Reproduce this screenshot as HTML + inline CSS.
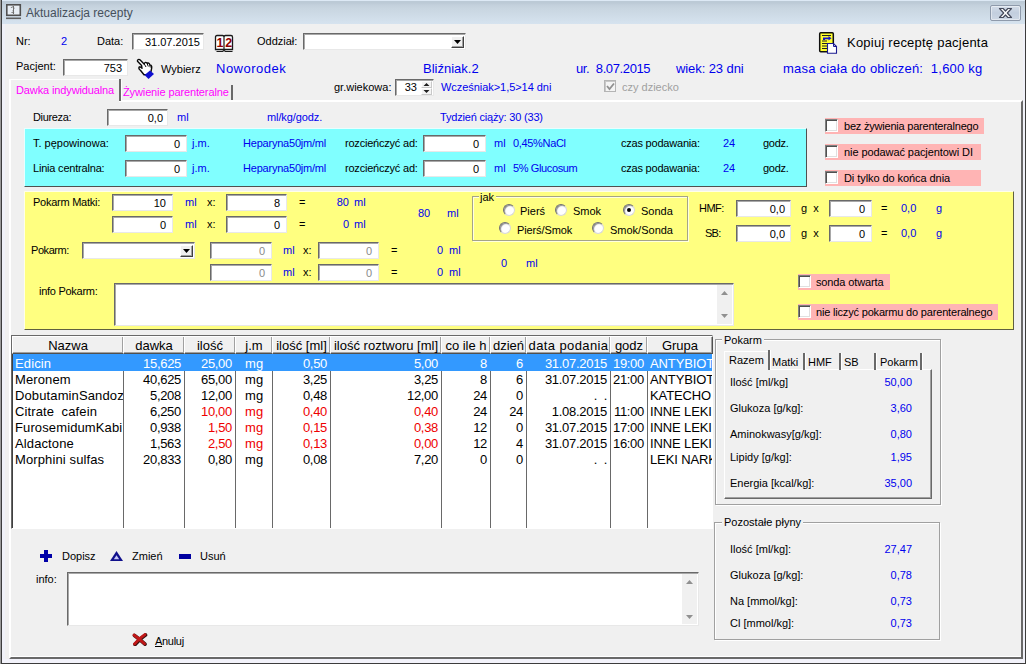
<!DOCTYPE html>
<html><head><meta charset="utf-8"><title>Aktualizacja recepty</title>
<style>
*{box-sizing:border-box;margin:0;padding:0}
html,body{width:1026px;height:664px;overflow:hidden;background:#f0f0f0}
body{font-family:"Liberation Sans",sans-serif;font-size:11px;color:#000;position:relative}
.a{position:absolute;white-space:nowrap;line-height:13px}
.b{color:#0000ee}
.m{color:#ff00ff}
.r{color:#ee0000}
.w{color:#fff}
.g{color:#a0a0a0}
.f13{font-size:13px;line-height:15px}
.f12{font-size:12px;line-height:14px}
.in{position:absolute;background:#fff;border:1px solid;border-color:#696969 #e8e8e8 #e8e8e8 #696969;box-shadow:inset 1px 1px 0 #a8a8a8;text-align:right;font-size:11px;line-height:13px;padding:2px 6px 0 0;white-space:nowrap;overflow:hidden}
.in.d{color:#8a8a8a}
.cb{position:absolute;width:13px;height:13px;background:#fff;border:1px solid;border-color:#808080 #fff #fff #808080;box-shadow:inset 1px 1px 0 #505050,inset -1px -1px 0 #e0e0e0}
.pk{position:absolute;background:#ffb4b4;height:16px}
.rd{position:absolute;width:12px;height:12px;border-radius:50%;background:#fff;border:1px solid;border-color:#707070 #d8d8d8 #d8d8d8 #707070;box-shadow:inset 1px 1px 1px #909090}
.rd.on::after{content:"";position:absolute;left:3px;top:3px;width:4px;height:4px;border-radius:50%;background:#000}
.hd{position:absolute;top:336px;height:18px;background:#f0f0f0;border:1px solid;border-color:#fff #505050 #505050 #fff;box-shadow:inset -1px -1px 0 #a0a0a0;text-align:center;font-size:13px;line-height:16px;padding-top:1px;overflow:hidden;white-space:nowrap}
.c{position:absolute;font-size:13px;line-height:16px;height:16px;white-space:nowrap;overflow:hidden}
.cr{text-align:right;letter-spacing:-0.3px}
.cn{letter-spacing:0.12px}
.vl{position:absolute;width:1px;background:#696969;top:354px;height:174px}
.gb{position:absolute;border:1px solid #a0a0a0;box-shadow:1px 1px 0 #fff,inset 1px 1px 0 #fff}
</style></head><body>
<div class="a" style="left:0px;top:0px;width:1026px;height:664px;background:#f0f0f0"></div>
<div class="a" style="left:0px;top:0px;width:1026px;height:24px;background:linear-gradient(#dde9f5 0,#dde9f5 1px,#bccad6 1.500px,#bccad6 3px,#c3d0dc 5px,#c8d5e0 8px,#d6e3ef 24px)"></div>
<div class="a" style="left:0px;top:0px;width:1px;height:664px;background:#9a9a9a"></div>
<div class="a" style="left:1px;top:0px;width:1px;height:664px;background:#3c3c3c"></div>
<div class="a" style="left:2px;top:24px;width:3px;height:640px;background:#f0f1f8"></div>
<div class="a" style="left:1025px;top:0px;width:1px;height:664px;background:#3c3c3c"></div>
<div class="a" style="left:1023px;top:24px;width:2px;height:640px;background:#f0f1f8"></div>
<div class="a" style="left:1px;top:663px;width:1025px;height:1px;background:#3c3c3c"></div>
<div class="a" style="left:2px;top:659px;width:1023px;height:4px;background:#f2f2fa"></div>
<svg class="a" style="left:6px;top:4px" width="16" height="16" viewBox="0 0 16 16"><rect x="0.8" y="0.8" width="13.5" height="10.5" fill="#e8eef4" stroke="#505050" stroke-width="1.600"/><rect x="0" y="13.500" width="15" height="1.600" fill="#606060"/><path d="M7.500 2v8M5 4c1-2 4-1 2.500 1.500S10 9 5.500 8.500" stroke="#707070" fill="none" stroke-width="1"/></svg>
<div class="a f12" style="left:26px;top:6px;color:#46505c">Aktualizacja recepty</div>
<div class="a" style="left:990px;top:5px;width:31px;height:16px;border:1px solid #8e9aab;border-radius:2px;background:linear-gradient(#d3dce8,#c2cede 50%,#cdd7e4);box-shadow:inset 0 0 0 1px rgba(255,255,255,.45)"></div>
<svg class="a" style="left:998px;top:7px" width="15" height="12" viewBox="0 0 15 12"><path d="M1.500 1.500h3.600l2.400 2.500 2.400-2.500h3.600l-4.200 4.500 4.200 4.500h-3.600l-2.400-2.500-2.400 2.500h-3.600l4.200-4.500z" fill="#fff" stroke="#464b5c" stroke-width="1.200" stroke-linejoin="round"/></svg>
<div class="a " style="left:16px;top:35px;">Nr:</div>
<div class="a b" style="left:61px;top:35px;">2</div>
<div class="a " style="left:97px;top:35px;">Data:</div>
<div class="in " style="left:132px;top:33px;width:72px;height:17px;padding-right:3px">31.07.2015</div>
<svg class="a" style="left:214px;top:34px" width="20" height="19" viewBox="0 0 20 19"><path d="M1.500 3Q1.500 1.500 3 1.500H8.500Q10 1.500 10 3Q10 1.500 11.500 1.500H17Q18.500 1.500 18.500 3V15.500H1.500Z" fill="#fff" stroke="#1a1a1a" stroke-width="1.300"/><path d="M10 3V15.500M2.500 17.500H8.500L10 16.500L11.500 17.500H18.500" fill="none" stroke="#1a1a1a" stroke-width="1.200"/><text x="2.600" y="13" font-family="Liberation Sans" font-weight="bold" font-size="12.500" fill="#900000">1</text><text x="11.300" y="13" font-family="Liberation Sans" font-weight="bold" font-size="12.500" fill="#900000">2</text></svg>
<div class="a " style="left:257px;top:35px;">Oddział:</div>
<div class="in " style="left:303px;top:33px;width:163px;height:17px;"></div>
<div class="a" style="left:451px;top:36px;width:13px;height:12px;background:#f0f0f0;border:1px solid;border-color:#fff #404040 #404040 #fff;box-shadow:inset -1px -1px 0 #a0a0a0"></div>
<svg class="a" style="left:454px;top:40px" width="7" height="4" viewBox="0 0 7 4"><path d="M0 0h7l-3.500 4z" fill="#000"/></svg>
<svg class="a" style="left:818px;top:31px" width="21" height="23" viewBox="0 0 21 23"><rect x="1.700" y="1.700" width="13.600" height="19" rx="1" fill="#ffff30" stroke="#101010" stroke-width="1.500"/><path d="M4 4.500h9M4 10h5M4 12.500h5M4 15h5M4 17.500h5" stroke="#202020" stroke-width="1.100"/><path d="M5 9V6.500h5.500V5l3 2.300-3 2.200V8.200H7V9z" fill="#1414c8"/><path d="M9.500 12.500h6l3 3v6.800h-9z" fill="#fff" stroke="#1a1a90" stroke-width="1.100"/><path d="M15.500 12.500v3h3" fill="none" stroke="#1a1a90" stroke-width="1"/></svg>
<div class="a f13" style="left:847px;top:35px;letter-spacing:0.23px;">Kopiuj receptę pacjenta</div>
<div class="a " style="left:16px;top:60px;">Pacjent:</div>
<div class="in " style="left:63px;top:59px;width:65px;height:17px;padding-right:5px">753</div>
<svg class="a" style="left:136px;top:58px" width="20" height="22" viewBox="0 0 20 22"><path d="M1.500 3.200C1 1.600 3 0.800 4.200 2L8.300 6.200C8.500 4 10.500 3.800 11.200 5.600C12 4.600 13.600 5 13.800 7C15 6.800 16 8 15.700 9.800L15 13.500L12 16.500L8 16.800L4.600 12.500C2.500 11 2.200 9.200 4 8.800L6 10.300L5.600 7.600Z" fill="#fff" stroke="#0a0a0a" stroke-width="1.400" stroke-linejoin="round"/><path d="M8.600 6.500L10 9M11.300 6L12.300 8.500M13.800 7.300L14.300 9.500" stroke="#0a0a0a" stroke-width="1" fill="none"/><path d="M8.500 17L14 12.500L18 16L12.500 21Z" fill="#1010d0"/></svg>
<div class="a " style="left:161px;top:63px;">Wybierz</div>
<div class="a b f13" style="left:216px;top:61px;letter-spacing:0.50px;">Noworodek</div>
<div class="a b f13" style="left:423px;top:61px;">Bliźniak.2</div>
<div class="a b f13" style="left:576px;top:61px;letter-spacing:-0.38px;">ur.&nbsp; 8.07.2015</div>
<div class="a b f13" style="left:676px;top:61px;letter-spacing:-0.09px;">wiek: 23 dni</div>
<div class="a b f13" style="left:783px;top:61px;letter-spacing:0.22px;">masa ciała do obliczeń:&nbsp; 1,600 kg</div>
<div class="a " style="left:334px;top:81px;">gr.wiekowa:</div>
<div class="in " style="left:395px;top:79px;width:39px;height:17px;padding:1px 16px 0 0">33</div>
<div class="a" style="left:421px;top:81px;width:11px;height:7px;background:#f4f4f4;border:1px solid;border-color:#fff #c8c8c8 #c8c8c8 #fff"></div>
<div class="a" style="left:421px;top:88px;width:11px;height:7px;background:#f4f4f4;border:1px solid;border-color:#fff #c8c8c8 #c8c8c8 #fff"></div>
<svg class="a" style="left:423px;top:83px" width="7" height="10" viewBox="0 0 7 10"><path d="M0.500 3h6l-3-3zM0.500 7h6l-3 3z" fill="#202020"/></svg>
<div class="a b" style="left:441px;top:81px;letter-spacing:-0.05px;">Wcześniak&gt;1,5&gt;14 dni</div>
<div class="a" style="left:604px;top:80px;width:12px;height:12px;background:#f4f4f4;border:1px solid #b4b4b4;box-shadow:inset 1px 1px 0 #c8c8c8"></div>
<svg class="a" style="left:606px;top:82px" width="9" height="9" viewBox="0 0 9 9"><path d="M1 4l2.500 3L8 1.500" stroke="#909090" stroke-width="1.800" fill="none"/></svg>
<div class="a g" style="left:622px;top:81px;">czy dziecko</div>
<div class="a" style="left:9px;top:100px;width:1014px;height:559px;border:2px solid;border-color:#fff #696969 #696969 #fff;background:#f0f0f0"></div>
<div class="a" style="left:11px;top:656px;width:1010px;height:1px;background:#fff"></div>
<div class="a" style="left:9px;top:79px;width:110px;height:23px;background:#f0f0f0;border-top:1px solid #fff;border-left:2px solid #fff"></div>
<div class="a m" style="left:16px;top:84px;letter-spacing:-0.12px;">Dawka indywidualna</div>
<div class="a" style="left:119px;top:79px;width:2px;height:22px;background:#696969"></div>
<div class="a" style="left:121px;top:80px;width:1px;height:20px;background:#fff"></div>
<div class="a m" style="left:123px;top:86px;letter-spacing:-0.12px;">Żywienie parenteralne</div>
<div class="a" style="left:231px;top:85px;width:2px;height:15px;background:#696969"></div>
<div class="a " style="left:33px;top:111px;letter-spacing:-0.34px;">Diureza:</div>
<div class="in " style="left:107px;top:109px;width:61px;height:17px;padding-right:4px">0,0</div>
<div class="a b" style="left:177px;top:111px;">ml</div>
<div class="a b" style="left:267px;top:111px;letter-spacing:-0.10px;">ml/kg/godz.</div>
<div class="a b" style="left:440px;top:111px;letter-spacing:-0.19px;">Tydzień ciąży: 30 (33)</div>
<div class="a" style="left:24px;top:128px;width:783px;height:59px;background:#80ffff;border:1px solid;border-color:#e8ffff #505050 #505050 #e8ffff"></div>
<div class="a " style="left:33px;top:137px;">T. pępowinowa:</div>
<div class="in " style="left:125px;top:135px;width:62px;height:17px;">0</div>
<div class="a b" style="left:192px;top:137px;">j.m.</div>
<div class="a b" style="left:243px;top:137px;letter-spacing:-0.21px;">Heparyna50jm/ml</div>
<div class="a " style="left:345px;top:137px;letter-spacing:-0.21px;">rozcieńczyć ad:</div>
<div class="in " style="left:423px;top:135px;width:63px;height:17px;">0</div>
<div class="a b" style="left:494px;top:137px;">ml</div>
<div class="a b" style="left:513px;top:137px;letter-spacing:-0.33px;">0,45%NaCl</div>
<div class="a " style="left:621px;top:137px;letter-spacing:-0.21px;">czas podawania:</div>
<div class="a b" style="left:723px;top:137px;">24</div>
<div class="a " style="left:763px;top:137px;letter-spacing:-0.25px;">godz.</div>
<div class="a " style="left:33px;top:162px;letter-spacing:-0.20px;">Linia centralna:</div>
<div class="in " style="left:125px;top:160px;width:62px;height:17px;">0</div>
<div class="a b" style="left:192px;top:162px;">j.m.</div>
<div class="a b" style="left:243px;top:162px;letter-spacing:-0.21px;">Heparyna50jm/ml</div>
<div class="a " style="left:345px;top:162px;letter-spacing:-0.21px;">rozcieńczyć ad:</div>
<div class="in " style="left:423px;top:160px;width:63px;height:17px;">0</div>
<div class="a b" style="left:494px;top:162px;">ml</div>
<div class="a b" style="left:513px;top:162px;letter-spacing:-0.38px;">5% Glucosum</div>
<div class="a " style="left:621px;top:162px;letter-spacing:-0.21px;">czas podawania:</div>
<div class="a b" style="left:723px;top:162px;">24</div>
<div class="a " style="left:763px;top:162px;letter-spacing:-0.25px;">godz.</div>
<div class="pk" style="left:825px;top:118px;width:159px"></div>
<div class="cb " style="left:825px;top:119px"></div>
<div class="a " style="left:844px;top:120px;letter-spacing:-0.21px;">bez żywienia parenteralnego</div>
<div class="pk" style="left:825px;top:144px;width:156px"></div>
<div class="cb " style="left:825px;top:145px"></div>
<div class="a " style="left:844px;top:146px;letter-spacing:-0.08px;">nie podawać pacjentowi DI</div>
<div class="pk" style="left:825px;top:170px;width:156px"></div>
<div class="cb " style="left:825px;top:171px"></div>
<div class="a " style="left:844px;top:172px;letter-spacing:-0.07px;">Di tylko do końca dnia</div>
<div class="a" style="left:24px;top:191px;width:990px;height:139px;background:#ffff80;border:1px solid;border-color:#ffffe8 #606040 #606040 #ffffe8"></div>
<div class="a " style="left:33px;top:196px;letter-spacing:-0.25px;">Pokarm Matki:</div>
<div class="in " style="left:112px;top:194px;width:61px;height:17px;">10</div>
<div class="in " style="left:112px;top:216px;width:61px;height:17px;">0</div>
<div class="in " style="left:226px;top:194px;width:61px;height:17px;">8</div>
<div class="in " style="left:226px;top:216px;width:61px;height:17px;">0</div>
<div class="a b" style="left:185px;top:196px;">ml</div>
<div class="a " style="left:207px;top:196px;">x:</div>
<div class="a " style="left:299px;top:196px;">=</div>
<div class="a b" style="left:185px;top:218px;">ml</div>
<div class="a " style="left:207px;top:218px;">x:</div>
<div class="a " style="left:299px;top:218px;">=</div>
<div class="a b" style="right:677px;top:196px;">80</div>
<div class="a b" style="left:354px;top:196px;">ml</div>
<div class="a b" style="right:677px;top:218px;">0</div>
<div class="a b" style="left:354px;top:218px;">ml</div>
<div class="a b" style="left:418px;top:207px;">80</div>
<div class="a b" style="left:447px;top:207px;">ml</div>
<div class="a" style="left:472px;top:196px;width:216px;height:45px;border:1px solid #a4a488;box-shadow:inset 1px 1px 0 #ffffe0,1px 1px 0 #ffffe0"></div>
<div class="a " style="left:479px;top:192px;background:#ffff80;padding:0 2px 0 1px;line-height:11px">jak</div>
<div class="rd" style="left:503px;top:204px"></div>
<div class="a " style="left:520px;top:205px;">Pierś</div>
<div class="rd" style="left:555px;top:204px"></div>
<div class="a " style="left:573px;top:205px;">Smok</div>
<div class="rd on" style="left:623px;top:204px"></div>
<div class="a " style="left:641px;top:205px;">Sonda</div>
<div class="rd" style="left:499px;top:222px"></div>
<div class="a " style="left:517px;top:224px;letter-spacing:-0.11px;">Pierś/Smok</div>
<div class="rd" style="left:592px;top:222px"></div>
<div class="a " style="left:610px;top:224px;">Smok/Sonda</div>
<div class="a " style="left:699px;top:202px;letter-spacing:-0.50px;">HMF:</div>
<div class="in " style="left:736px;top:200px;width:55px;height:17px;padding-right:5px">0,0</div>
<div class="a " style="left:801px;top:202px;">g&nbsp; x</div>
<div class="in " style="left:829px;top:200px;width:43px;height:17px;">0</div>
<div class="a " style="left:881px;top:202px;">=</div>
<div class="a b" style="left:901px;top:202px;">0,0</div>
<div class="a b" style="left:936px;top:202px;">g</div>
<div class="a " style="left:705px;top:227px;letter-spacing:-0.75px;">SB:</div>
<div class="in " style="left:736px;top:225px;width:55px;height:17px;padding-right:5px">0,0</div>
<div class="a " style="left:801px;top:227px;">g&nbsp; x</div>
<div class="in " style="left:829px;top:225px;width:43px;height:17px;">0</div>
<div class="a " style="left:881px;top:227px;">=</div>
<div class="a b" style="left:901px;top:227px;">0,0</div>
<div class="a b" style="left:936px;top:227px;">g</div>
<div class="a " style="left:31px;top:244px;letter-spacing:-0.43px;">Pokarm:</div>
<div class="in " style="left:82px;top:242px;width:113px;height:17px;"></div>
<div class="a" style="left:180px;top:245px;width:13px;height:12px;background:#f0f0f0;border:1px solid;border-color:#fff #404040 #404040 #fff;box-shadow:inset -1px -1px 0 #a0a0a0"></div>
<svg class="a" style="left:183px;top:249px" width="7" height="4" viewBox="0 0 7 4"><path d="M0 0h7l-3.500 4z" fill="#000"/></svg>
<div class="in d" style="left:210px;top:242px;width:62px;height:17px;">0</div>
<div class="a b" style="left:283px;top:244px;">ml</div>
<div class="a " style="left:303px;top:244px;">x:</div>
<div class="in d" style="left:318px;top:242px;width:61px;height:17px;">0</div>
<div class="a " style="left:391px;top:244px;">=</div>
<div class="a b" style="right:583px;top:244px;">0</div>
<div class="a b" style="left:449px;top:244px;">ml</div>
<div class="in d" style="left:210px;top:264px;width:62px;height:17px;">0</div>
<div class="a b" style="left:283px;top:266px;">ml</div>
<div class="a " style="left:303px;top:266px;">x:</div>
<div class="in d" style="left:318px;top:264px;width:61px;height:17px;">0</div>
<div class="a " style="left:391px;top:266px;">=</div>
<div class="a b" style="right:583px;top:266px;">0</div>
<div class="a b" style="left:449px;top:266px;">ml</div>
<div class="a b" style="left:501px;top:257px;">0</div>
<div class="a b" style="left:526px;top:257px;">ml</div>
<div class="a " style="left:39px;top:285px;letter-spacing:-0.27px;">info Pokarm:</div>
<div class="in " style="left:114px;top:283px;width:620px;height:43px;"></div>
<div class="a" style="left:717px;top:285px;width:15px;height:39px;background:#f0f0f0"></div>
<svg class="a" style="left:721px;top:291px" width="7" height="4" viewBox="0 0 7 4"><path d="M0 4h7L3.500 0z" fill="#909090"/></svg>
<svg class="a" style="left:721px;top:314px" width="7" height="4" viewBox="0 0 7 4"><path d="M0 0h7L3.500 4z" fill="#909090"/></svg>
<div class="pk" style="left:798px;top:274px;width:92px"></div>
<div class="cb " style="left:798px;top:275px"></div>
<div class="a " style="left:816px;top:276px;letter-spacing:-0.13px;">sonda otwarta</div>
<div class="pk" style="left:798px;top:304px;width:200px"></div>
<div class="cb " style="left:798px;top:305px"></div>
<div class="a " style="left:816px;top:306px;letter-spacing:-0.18px;">nie liczyć pokarmu do parenteralnego</div>
<div class="a" style="left:11px;top:335px;width:702px;height:194px;background:#fff;border:1px solid;border-color:#696969 #fff #fff #696969;box-shadow:inset 1px 0 0 #404040"></div>
<div class="hd" style="left:12px;width:112px;">Nazwa</div>
<div class="hd" style="left:123px;width:62px;">dawka</div>
<div class="hd" style="left:184px;width:52px;">ilość</div>
<div class="hd" style="left:235px;width:38px;">j.m</div>
<div class="hd" style="left:272px;width:59px;">ilość [ml]</div>
<div class="hd" style="left:330px;width:112px;">ilość roztworu [ml]</div>
<div class="hd" style="left:441px;width:50px;">co ile h</div>
<div class="hd" style="left:490px;width:37px;">dzień</div>
<div class="hd" style="left:526px;width:85px;letter-spacing:0.4px;">data podania</div>
<div class="hd" style="left:610px;width:38px;">godz</div>
<div class="hd" style="left:647px;width:66px;">Grupa</div>
<div class="vl" style="left:123px"></div>
<div class="vl" style="left:184px"></div>
<div class="vl" style="left:235px"></div>
<div class="vl" style="left:272px"></div>
<div class="vl" style="left:330px"></div>
<div class="vl" style="left:441px"></div>
<div class="vl" style="left:490px"></div>
<div class="vl" style="left:526px"></div>
<div class="vl" style="left:610px"></div>
<div class="vl" style="left:647px"></div>
<div class="a" style="left:13px;top:354px;width:699px;height:17px;background:#3399ff"></div>
<div class="c cn w" style="left:13px;top:356px;width:110px;padding-left:2px;">Edicin</div>
<div class="c cr w" style="left:124px;top:356px;width:60px;padding-right:3px;">15,625</div>
<div class="c cr w" style="left:185px;top:356px;width:50px;padding-right:3px;">25,00</div>
<div class="c cn w" style="left:236px;top:356px;width:36px;padding-left:9px;">mg</div>
<div class="c cr w" style="left:273px;top:356px;width:57px;padding-right:3px;">0,50</div>
<div class="c cr w" style="left:331px;top:356px;width:110px;padding-right:3px;">5,00</div>
<div class="c cr w" style="left:442px;top:356px;width:48px;padding-right:3px;">8</div>
<div class="c cr w" style="left:491px;top:356px;width:35px;padding-right:3px;">6</div>
<div class="c cr w" style="left:527px;top:356px;width:83px;padding-right:3px;">31.07.2015</div>
<div class="c cr w" style="left:611px;top:356px;width:36px;padding-right:3px;">19:00</div>
<div class="c cn w" style="left:648px;top:356px;width:64px;padding-left:2px;letter-spacing:-0.12px;">ANTYBIOT</div>
<div class="c cn" style="left:13px;top:372px;width:110px;padding-left:2px;">Meronem</div>
<div class="c cr" style="left:124px;top:372px;width:60px;padding-right:3px;">40,625</div>
<div class="c cr" style="left:185px;top:372px;width:50px;padding-right:3px;">65,00</div>
<div class="c cn" style="left:236px;top:372px;width:36px;padding-left:9px;">mg</div>
<div class="c cr" style="left:273px;top:372px;width:57px;padding-right:3px;">3,25</div>
<div class="c cr" style="left:331px;top:372px;width:110px;padding-right:3px;">3,25</div>
<div class="c cr" style="left:442px;top:372px;width:48px;padding-right:3px;">8</div>
<div class="c cr" style="left:491px;top:372px;width:35px;padding-right:3px;">6</div>
<div class="c cr" style="left:527px;top:372px;width:83px;padding-right:3px;">31.07.2015</div>
<div class="c cr" style="left:611px;top:372px;width:36px;padding-right:3px;">21:00</div>
<div class="c cn" style="left:648px;top:372px;width:64px;padding-left:2px;letter-spacing:-0.12px;">ANTYBIOT</div>
<div class="c cn" style="left:13px;top:388px;width:110px;padding-left:2px;">DobutaminSandoz</div>
<div class="c cr" style="left:124px;top:388px;width:60px;padding-right:3px;">5,208</div>
<div class="c cr" style="left:185px;top:388px;width:50px;padding-right:3px;">12,00</div>
<div class="c cn" style="left:236px;top:388px;width:36px;padding-left:9px;">mg</div>
<div class="c cr" style="left:273px;top:388px;width:57px;padding-right:3px;">0,48</div>
<div class="c cr" style="left:331px;top:388px;width:110px;padding-right:3px;">12,00</div>
<div class="c cr" style="left:442px;top:388px;width:48px;padding-right:3px;">24</div>
<div class="c cr" style="left:491px;top:388px;width:35px;padding-right:3px;">0</div>
<div class="c cr" style="left:527px;top:388px;width:83px;padding-right:3px;">.&nbsp; .</div>
<div class="c cr" style="left:611px;top:388px;width:36px;padding-right:3px;"></div>
<div class="c cn" style="left:648px;top:388px;width:64px;padding-left:2px;letter-spacing:-0.12px;">KATECHO</div>
<div class="c cn" style="left:13px;top:404px;width:110px;padding-left:2px;">Citrate&nbsp; cafein</div>
<div class="c cr" style="left:124px;top:404px;width:60px;padding-right:3px;">6,250</div>
<div class="c cr r" style="left:185px;top:404px;width:50px;padding-right:3px;">10,00</div>
<div class="c cn r" style="left:236px;top:404px;width:36px;padding-left:9px;">mg</div>
<div class="c cr r" style="left:273px;top:404px;width:57px;padding-right:3px;">0,40</div>
<div class="c cr r" style="left:331px;top:404px;width:110px;padding-right:3px;">0,40</div>
<div class="c cr" style="left:442px;top:404px;width:48px;padding-right:3px;">24</div>
<div class="c cr" style="left:491px;top:404px;width:35px;padding-right:3px;">24</div>
<div class="c cr" style="left:527px;top:404px;width:83px;padding-right:3px;">1.08.2015</div>
<div class="c cr" style="left:611px;top:404px;width:36px;padding-right:3px;">11:00</div>
<div class="c cn" style="left:648px;top:404px;width:64px;padding-left:2px;letter-spacing:-0.12px;">INNE LEKI</div>
<div class="c cn" style="left:13px;top:420px;width:110px;padding-left:2px;">FurosemidumKabi</div>
<div class="c cr" style="left:124px;top:420px;width:60px;padding-right:3px;">0,938</div>
<div class="c cr r" style="left:185px;top:420px;width:50px;padding-right:3px;">1,50</div>
<div class="c cn r" style="left:236px;top:420px;width:36px;padding-left:9px;">mg</div>
<div class="c cr r" style="left:273px;top:420px;width:57px;padding-right:3px;">0,15</div>
<div class="c cr r" style="left:331px;top:420px;width:110px;padding-right:3px;">0,38</div>
<div class="c cr" style="left:442px;top:420px;width:48px;padding-right:3px;">12</div>
<div class="c cr" style="left:491px;top:420px;width:35px;padding-right:3px;">0</div>
<div class="c cr" style="left:527px;top:420px;width:83px;padding-right:3px;">31.07.2015</div>
<div class="c cr" style="left:611px;top:420px;width:36px;padding-right:3px;">17:00</div>
<div class="c cn" style="left:648px;top:420px;width:64px;padding-left:2px;letter-spacing:-0.12px;">INNE LEKI</div>
<div class="c cn" style="left:13px;top:436px;width:110px;padding-left:2px;">Aldactone</div>
<div class="c cr" style="left:124px;top:436px;width:60px;padding-right:3px;">1,563</div>
<div class="c cr r" style="left:185px;top:436px;width:50px;padding-right:3px;">2,50</div>
<div class="c cn r" style="left:236px;top:436px;width:36px;padding-left:9px;">mg</div>
<div class="c cr r" style="left:273px;top:436px;width:57px;padding-right:3px;">0,13</div>
<div class="c cr r" style="left:331px;top:436px;width:110px;padding-right:3px;">0,00</div>
<div class="c cr" style="left:442px;top:436px;width:48px;padding-right:3px;">12</div>
<div class="c cr" style="left:491px;top:436px;width:35px;padding-right:3px;">4</div>
<div class="c cr" style="left:527px;top:436px;width:83px;padding-right:3px;">31.07.2015</div>
<div class="c cr" style="left:611px;top:436px;width:36px;padding-right:3px;">16:00</div>
<div class="c cn" style="left:648px;top:436px;width:64px;padding-left:2px;letter-spacing:-0.12px;">INNE LEKI</div>
<div class="c cn" style="left:13px;top:452px;width:110px;padding-left:2px;">Morphini sulfas</div>
<div class="c cr" style="left:124px;top:452px;width:60px;padding-right:3px;">20,833</div>
<div class="c cr" style="left:185px;top:452px;width:50px;padding-right:3px;">0,80</div>
<div class="c cn" style="left:236px;top:452px;width:36px;padding-left:9px;">mg</div>
<div class="c cr" style="left:273px;top:452px;width:57px;padding-right:3px;">0,08</div>
<div class="c cr" style="left:331px;top:452px;width:110px;padding-right:3px;">7,20</div>
<div class="c cr" style="left:442px;top:452px;width:48px;padding-right:3px;">0</div>
<div class="c cr" style="left:491px;top:452px;width:35px;padding-right:3px;">0</div>
<div class="c cr" style="left:527px;top:452px;width:83px;padding-right:3px;">.&nbsp; .</div>
<div class="c cr" style="left:611px;top:452px;width:36px;padding-right:3px;"></div>
<div class="c cn" style="left:648px;top:452px;width:64px;padding-left:2px;letter-spacing:-0.12px;">LEKI NARK</div>
<div class="gb" style="left:715px;top:339px;width:226px;height:166px"></div>
<div class="a " style="left:722px;top:334px;background:#f0f0f0;padding:0 2px">Pokarm</div>
<div class="a" style="left:724px;top:369px;width:208px;height:130px;border:1px solid;border-color:#fff #696969 #696969 #fff;box-shadow:inset -1px -1px 0 #a0a0a0;background:#f0f0f0"></div>
<div class="a" style="left:724px;top:351px;width:44px;height:20px;background:#f0f0f0;border-left:1px solid #fff;border-top:1px solid #fff"></div>
<div class="a " style="left:729px;top:354px;">Razem</div>
<div class="a " style="left:772px;top:356px;">Matki</div>
<div class="a " style="left:808px;top:356px;">HMF</div>
<div class="a " style="left:844px;top:356px;">SB</div>
<div class="a " style="left:880px;top:356px;">Pokarm</div>
<div class="a" style="left:768px;top:350px;width:2px;height:20px;background:#696969"></div>
<div class="a" style="left:770px;top:350px;width:1px;height:20px;background:#fff"></div>
<div class="a" style="left:803px;top:353px;width:2px;height:17px;background:#696969"></div>
<div class="a" style="left:805px;top:353px;width:1px;height:17px;background:#fff"></div>
<div class="a" style="left:839px;top:353px;width:2px;height:17px;background:#696969"></div>
<div class="a" style="left:841px;top:353px;width:1px;height:17px;background:#fff"></div>
<div class="a" style="left:874px;top:353px;width:2px;height:17px;background:#696969"></div>
<div class="a" style="left:876px;top:353px;width:1px;height:17px;background:#fff"></div>
<div class="a" style="left:920px;top:353px;width:2px;height:17px;background:#696969"></div>
<div class="a" style="left:922px;top:353px;width:1px;height:17px;background:#fff"></div>
<div class="a " style="left:730px;top:376px;">Ilość [ml/kg]</div>
<div class="a b" style="right:114px;top:376px;">50,00</div>
<div class="a " style="left:730px;top:402px;">Glukoza [g/kg]:</div>
<div class="a b" style="right:114px;top:402px;">3,60</div>
<div class="a " style="left:730px;top:428px;">Aminokwasy[g/kg]:</div>
<div class="a b" style="right:114px;top:428px;">0,80</div>
<div class="a " style="left:730px;top:451px;">Lipidy [g/kg]:</div>
<div class="a b" style="right:114px;top:451px;">1,95</div>
<div class="a " style="left:730px;top:477px;">Energia [kcal/kg]:</div>
<div class="a b" style="right:114px;top:477px;">35,00</div>
<div class="gb" style="left:714px;top:522px;width:226px;height:118px"></div>
<div class="a " style="left:722px;top:516px;background:#f0f0f0;padding:0 2px">Pozostałe płyny</div>
<div class="a " style="left:730px;top:543px;">Ilość [ml/kg]:</div>
<div class="a b" style="right:114px;top:543px;">27,47</div>
<div class="a " style="left:730px;top:569px;">Glukoza [g/kg]:</div>
<div class="a b" style="right:114px;top:569px;">0,78</div>
<div class="a " style="left:730px;top:595px;">Na [mmol/kg]:</div>
<div class="a b" style="right:114px;top:595px;">0,73</div>
<div class="a " style="left:730px;top:617px;">Cl [mmol/kg]:</div>
<div class="a b" style="right:114px;top:617px;">0,73</div>
<svg class="a" style="left:40px;top:550px" width="12" height="12" viewBox="0 0 12 12"><path d="M4 0h4v4h4v4H8v4H4V8H0V4h4z" fill="#0000a8"/></svg>
<div class="a " style="left:62px;top:550px;">Dopisz</div>
<svg class="a" style="left:110px;top:551px" width="13" height="10" viewBox="0 0 13 10"><path d="M6.500 0L13 10H0z" fill="#10108c"/><path d="M6.500 4.200L9.200 8.200H3.800z" fill="#c8c8f8"/></svg>
<div class="a " style="left:132px;top:550px;">Zmień</div>
<svg class="a" style="left:179px;top:554px" width="12" height="5" viewBox="0 0 12 5"><rect width="12" height="5" fill="#0000a0"/></svg>
<div class="a " style="left:200px;top:550px;">Usuń</div>
<div class="a " style="left:36px;top:573px;">info:</div>
<div class="in " style="left:67px;top:572px;width:632px;height:54px;"></div>
<div class="a" style="left:682px;top:574px;width:15px;height:50px;background:#f0f0f0"></div>
<svg class="a" style="left:686px;top:580px" width="7" height="4" viewBox="0 0 7 4"><path d="M0 4h7L3.500 0z" fill="#909090"/></svg>
<svg class="a" style="left:686px;top:615px" width="7" height="4" viewBox="0 0 7 4"><path d="M0 0h7L3.500 4z" fill="#909090"/></svg>
<svg class="a" style="left:132px;top:633px" width="16" height="13" viewBox="0 0 16 13"><path d="M2.500 2.500C6 5 9.500 8 13 11.200M13.500 2C9.500 4.500 6 8 3 11.500" stroke="#301010" stroke-width="3.600" stroke-linecap="round" fill="none"/><path d="M2 2C5.500 4.500 9 7.500 12.500 10.700M13 1.500C9 4 5.500 7.500 2.500 11" stroke="#c01818" stroke-width="2.800" stroke-linecap="round" fill="none"/></svg>
<div class="a " style="left:155px;top:635px;letter-spacing:-0.30px;"><u>A</u>nuluj</div>
</body></html>
